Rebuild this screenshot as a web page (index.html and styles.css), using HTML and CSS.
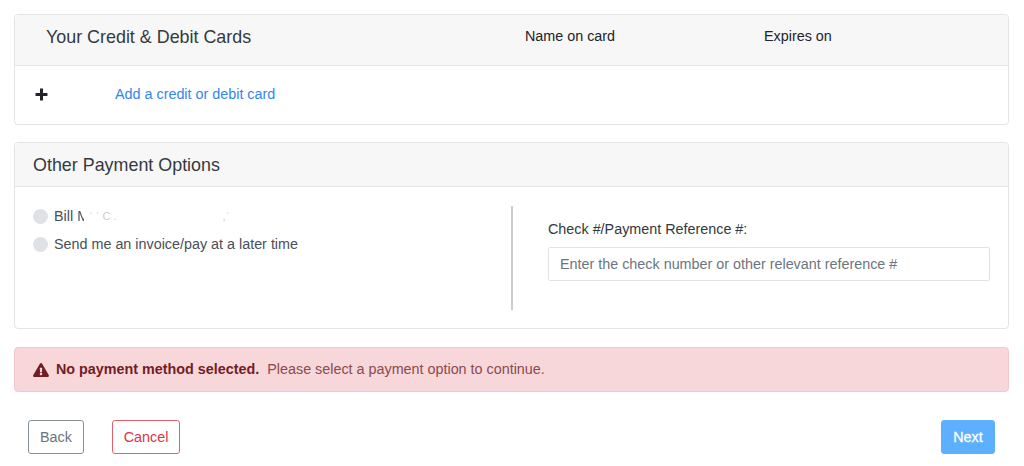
FILE: index.html
```html
<!DOCTYPE html>
<html lang="en">
<head>
<meta charset="utf-8">
<title>Payment</title>
<link rel="stylesheet" href="styles.css">
</head>
<body>
<main class="page">
  <section class="card">
    <div class="card-head cards-head">
      <h2 class="title title-cards">Your Credit &amp; Debit Cards</h2>
      <span class="col-name">Name on card</span>
      <span class="col-exp">Expires on</span>
    </div>
    <div class="add-row">
      <svg class="plus" viewBox="0 0 12 12" width="13" height="13" aria-hidden="true"><path d="M4.6 0.5h2.800v4.100h4.100v2.800H7.400v4.100H4.600V7.400H0.500V4.600h4.100z"/></svg>
      <a class="add-link" href="#">Add a credit or debit card</a>
    </div>
  </section>

  <section class="card other">
    <div class="card-head other-head">
      <h2 class="title">Other Payment Options</h2>
    </div>
    <div class="other-body">
      <div class="options">
        <label class="option"><span class="radio"></span><span class="bill">Bill <span class="fade">M</span></span><span class="smudge">ˈ ˈ C .</span><span class="smudge smudge-end">,ˈ</span></label>
        <label class="option"><span class="radio"></span><span>Send me an invoice/pay at a later time</span></label>
      </div>
      <div class="reference">
        <label class="ref-label" for="ref">Check #/Payment Reference #:</label>
        <input class="ref-input" id="ref" type="text" placeholder="Enter the check number or other relevant reference #">
      </div>
    </div>
  </section>

  <div class="alert">
    <svg class="warn" viewBox="0 0 576 512" width="16" height="14" aria-hidden="true"><path d="M569.500 440C588 472 564.800 512 527.900 512H48.100C11.100 512-12 472 6.500 440L246.400 24c18.500-32 64.700-32 83.200 0zM288 354c-25.400 0-46 20.600-46 46s20.600 46 46 46 46-20.600 46-46-20.600-46-46-46zm-43.700-165.300 7.400 136c.3 6.400 5.600 11.300 12 11.300h48.500c6.400 0 11.600-5 12-11.300l7.400-136c.4-6.900-5.100-12.700-12-12.700h-63.400c-6.900 0-12.400 5.800-12 12.700z"/></svg>
    <strong class="alert-strong">No payment method selected.</strong>
    <span class="alert-text">Please select a payment option to continue.</span>
  </div>

  <div class="actions">
    <button class="btn btn-back" type="button">Back</button>
    <button class="btn btn-cancel" type="button">Cancel</button>
    <button class="btn btn-next" type="button">Next</button>
  </div>
</main>
</body>
</html>
```
FILE: styles.css
```css
* { box-sizing: border-box; }
html, body { margin: 0; height: 466px; overflow: hidden; background: #fff; }
body {
  font-family: "Liberation Sans", Arial, sans-serif;
  font-size: 14.35px;
  line-height: 21px;
  color: #343a40;
}
.page { padding: 14px 15px 0 14px; }
.card {
  border: 1px solid #e4e4e4;
  border-radius: 4px;
  overflow: hidden;
  background: #fff;
}
.card-head {
  display: flex;
  background: #f7f7f7;
  border-bottom: 1px solid #e4e4e4;
}
.title { margin: 0; font-size: 17.9px; font-weight: 400; line-height: 22px; color: #343a40; }
.cards-head { height: 51px; padding: 11px 0 0 31px; }
.title-cards { width: 479px; }
.col-name { width: 239px; color: #212529; }
.col-exp { color: #212529; }
.add-row { display: flex; align-items: center; height: 58px; padding: 0 0 2px 20px; }
.plus { fill: #212529; flex: none; }
.add-link { margin-left: 67px; color: #3385f0; text-decoration: none; }
.other { margin-top: 17px; }
.other-head { height: 44px; padding: 11px 0 0 18px; }
.other-body { display: flex; height: 141px; padding: 19px 18px 18px; }
.options { width: 478px; display: flex; flex-direction: column; gap: 7px; }
.option { display: flex; align-items: center; height: 21px; color: #495057; }
.radio { width: 15px; height: 15px; border-radius: 50%; background: #dee2e6; margin-right: 6px; flex: none; }
.bill { white-space: pre; }
.fade {
  color: transparent;
  background: linear-gradient(to right, #495057 55%, transparent 55%);
  -webkit-background-clip: text;
  background-clip: text;
}
.smudge { color: #c8ccd0; font-size: 11px; }
.smudge-end { margin-left: 106px; }
.reference { flex: 1; border-left: 2px solid #ccc; height: 104px; padding: 13px 0 0 35px; }
.ref-label { display: block; color: #343a40; line-height: 21px; }
.ref-input {
  display: block;
  width: 100%;
  height: 34px;
  margin-top: 7px;
  padding: 0 11px 1px;
  border: 1px solid #dfe3e8;
  border-radius: 2px;
  font: inherit;
  color: #495057;
  background: #fff;
}
.ref-input::placeholder { color: #6c757d; opacity: 1; }
.alert {
  display: flex;
  align-items: center;
  height: 45px;
  margin-top: 18px;
  padding-left: 18px;
  background: #f8d7da;
  border: 1px solid #f5c6cb;
  border-radius: 4px;
  color: #721c24;
}
.warn { fill: #721c24; flex: none; margin-right: 7px; }
.alert-strong { font-weight: 700; }
.alert-text { margin-left: 8px; color: #8a4a50; }
.actions { display: flex; align-items: center; margin-top: 28px; padding: 0 14px; }
.btn {
  height: 34px;
  padding: 0;
  border: 1px solid;
  border-radius: 3px;
  font: inherit;
  background: #fff;
}
.btn-back { width: 56px; border-color: #868e96; color: #6c757d; }
.btn-cancel { width: 68px; margin-left: 28px; border-color: #e4606d; color: #dc3545; }
.btn-next { width: 54px; margin-left: auto; background: #5cb0ff; border-color: #5cb0ff; color: #fff; font-weight: 400; -webkit-text-stroke: 0.3px #fff; }
```
